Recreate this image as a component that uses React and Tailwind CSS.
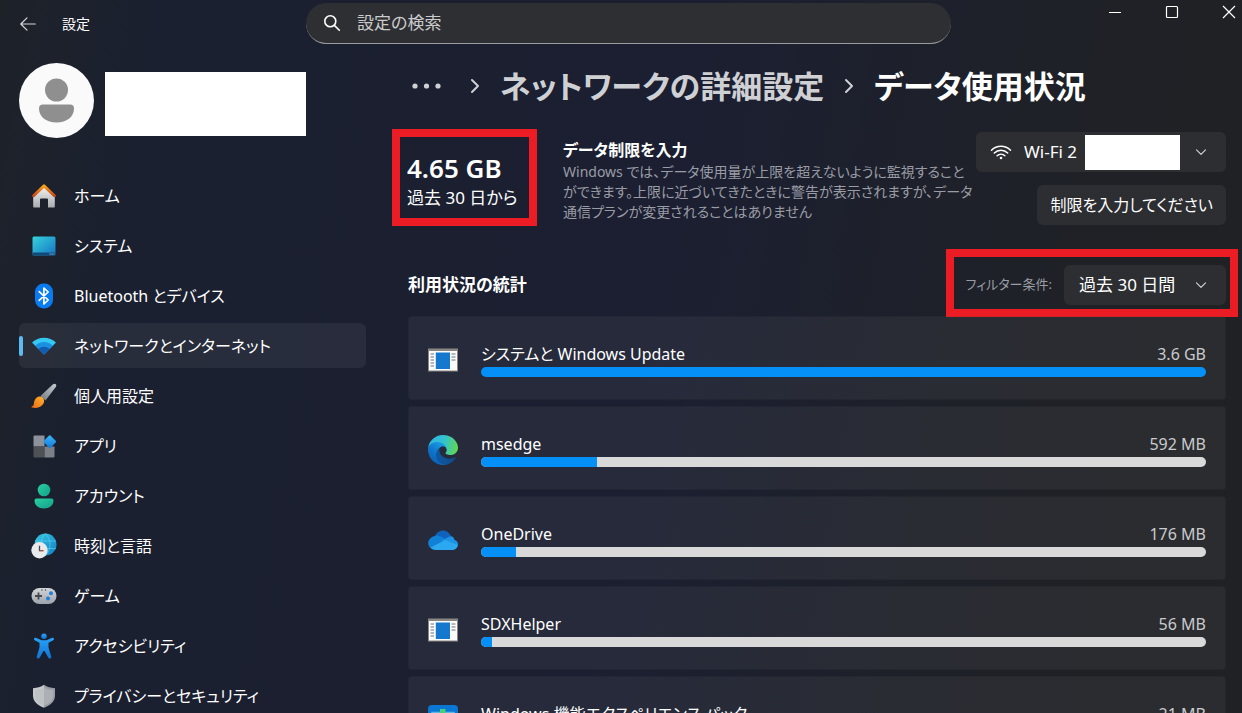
import React from 'react';

/* ---------- Navigation icons ---------- */

function HomeIcon() {
  return (
    <svg viewBox="0 0 24 24" className="w-6 h-6">
      <defs>
        <linearGradient id="homeWall" x1="0" y1="0" x2="0" y2="1">
          <stop offset="0" stopColor="#f3f3f3" />
          <stop offset="1" stopColor="#a9abae" />
        </linearGradient>
        <linearGradient id="homeRoof" x1="0" y1="0" x2="0" y2="1">
          <stop offset="0" stopColor="#f7a11b" />
          <stop offset="1" stopColor="#c9461a" />
        </linearGradient>
      </defs>
      <path d="M1.2 12 12 2.5 22.8 12v10.4a1.2 1.2 0 0 1-1.2 1.2H16V15.4a1 1 0 0 0-1-1H9a1 1 0 0 0-1 1v8.2H2.4a1.2 1.2 0 0 1-1.2-1.2z" fill="url(#homeWall)" />
      <path d="M1.6 11.8 12 1.9l10.4 9.9" fill="none" stroke="url(#homeRoof)" strokeWidth="2.9" strokeLinecap="round" strokeLinejoin="round" />
    </svg>
  );
}

function SystemIcon() {
  return (
    <svg viewBox="0 0 24 24" className="w-6 h-6">
      <defs>
        <linearGradient id="sysScreen" x1="0" y1="0" x2="1" y2="1">
          <stop offset="0" stopColor="#35d3dc" />
          <stop offset="1" stopColor="#1673c4" />
        </linearGradient>
      </defs>
      <rect x="0.5" y="2.5" width="23" height="19" rx="1.5" fill="url(#sysScreen)" />
      <path d="M.5 18.500h23V20a1.500 1.500 0 0 1-1.500 1.500H2A1.500 1.500 0 0 1 .5 20z" fill="#124a77" />
      <path d="M17.500 19.500h1.200v1h-1.200zM19.500 19.500h1.200v1h-1.200zM21.500 19.500h1v1h-1z" fill="#8fd0f0" />
    </svg>
  );
}

function BluetoothIcon() {
  return (
    <svg viewBox="0 0 24 26" className="w-6 h-[26px]">
      <rect x="3" y="0.500" width="18" height="25" rx="8.500" fill="#0a7cf2" />
      <path d="m7.200 8.700 9 8.300-4.300 4V5l4.300 4-9 8.300" fill="none" stroke="#fff" strokeWidth="1.700" strokeLinejoin="round" strokeLinecap="round" />
    </svg>
  );
}

function NetworkIcon() {
  return (
    <svg viewBox="0 0 24 24" className="w-6 h-6">
      <path d="M12 20.500 0 8.500C6.500 2 17.500 2 24 8.500z" fill="#35c8f3" />
      <path d="M12 20.500 3.200 11.700c4.900-4.800 12.700-4.800 17.600 0z" fill="#1b8fe0" />
      <path d="M12 20.500 6.400 14.900c3.100-3 8.100-3 11.200 0z" fill="#115bb0" />
    </svg>
  );
}

function BrushIcon() {
  return (
    <svg viewBox="0 0 26 26" className="w-[26px] h-[26px]">
      <defs>
        <linearGradient id="brushHandle" x1="1" y1="0" x2="0" y2="1">
          <stop offset="0" stopColor="#c6cad0" />
          <stop offset="1" stopColor="#767b83" />
        </linearGradient>
        <linearGradient id="brushTip" x1="1" y1="0" x2="0" y2="1">
          <stop offset="0" stopColor="#ffb52e" />
          <stop offset="1" stopColor="#ea6a12" />
        </linearGradient>
      </defs>
      <path d="M24.800 1.200c.9.900.5 2-.2 3L14.500 17.500l-5-4.600L21.700 1.500c1-.9 2.200-1.200 3.100-.3z" fill="url(#brushHandle)" />
      <path d="M8.200 13.600c2.400-.6 5.100 1.800 4.900 4.500-.2 4.600-5.600 8.200-12.100 6.400-.8-.3-.6-1 .1-1.200 2.200-.6 1.500-2.500 2.200-5 .7-2.500 2.600-4.300 4.900-4.700z" fill="url(#brushTip)" />
    </svg>
  );
}

function AppsIcon() {
  return (
    <svg viewBox="0 0 24 24" className="w-6 h-6">
      <defs>
        <linearGradient id="appDiamond" x1="0" y1="0" x2="1" y2="1">
          <stop offset="0" stopColor="#3bb8fa" />
          <stop offset="1" stopColor="#0f78d8" />
        </linearGradient>
      </defs>
      <path d="M2.500 1.500h10v11h-11v-10a1 1 0 0 1 1-1z" fill="#8d9199" />
      <path d="M1.500 12.500h11v11h-10a1 1 0 0 1-1-1z" fill="#4e5257" />
      <path d="M12.500 12.500h10v10a1 1 0 0 1-1 1h-9z" fill="#7b8087" />
      <rect x="13" y="2.800" width="9.600" height="9.600" rx="1" transform="rotate(45 17.800 7.600)" fill="url(#appDiamond)" />
    </svg>
  );
}

function AccountIcon() {
  return (
    <svg viewBox="0 0 24 26" className="w-6 h-[26px]">
      <defs>
        <linearGradient id="account" x1="0" y1="0" x2="1" y2="1">
          <stop offset="0" stopColor="#2ccf9f" />
          <stop offset="1" stopColor="#11a08c" />
        </linearGradient>
      </defs>
      <circle cx="12" cy="7" r="6.300" fill="url(#account)" />
      <path d="M4.500 15.500h15a2 2 0 0 1 2 2c0 4.800-4 8-9.500 8s-9.500-3.200-9.500-8a2 2 0 0 1 2-2z" fill="url(#account)" />
    </svg>
  );
}

function TimeIcon() {
  return (
    <svg viewBox="0 0 26 26" className="w-[26px] h-[26px]">
      <defs>
        <linearGradient id="globe" x1="0" y1="0" x2="1" y2="1">
          <stop offset="0" stopColor="#35c9e3" />
          <stop offset="1" stopColor="#137fc7" />
        </linearGradient>
      </defs>
      <circle cx="14.500" cy="11.500" r="11" fill="url(#globe)" />
      <path d="M4 8h21M4 15.500h21M14.500.5c-6 6-6 16 0 22M14.500.5c6 6 6 16 0 22" fill="none" stroke="#6fdcf0" strokeWidth="0.700" opacity="0.700" />
      <circle cx="8.500" cy="17.300" r="8.200" fill="#e9eaec" />
      <path d="M8.500 12.700v5h4" fill="none" stroke="#4a4a4e" strokeWidth="1.300" />
      <path d="M8.500 17.700h3.500" stroke="#c5524a" strokeWidth="0.900" />
    </svg>
  );
}

function GameIcon() {
  return (
    <svg viewBox="0 0 26 24" className="w-[26px] h-6">
      <defs>
        <linearGradient id="pad" x1="0" y1="0" x2="0" y2="1">
          <stop offset="0" stopColor="#d3d5d9" />
          <stop offset="1" stopColor="#9ea2aa" />
        </linearGradient>
      </defs>
      <rect x="0.500" y="4" width="25" height="16" rx="8" fill="url(#pad)" />
      <path d="M7.500 8.500v7M4 12h7" stroke="#45484d" strokeWidth="1.800" />
      <circle cx="20" cy="9.300" r="2" fill="#1f7fdb" />
      <circle cx="17" cy="14.500" r="2" fill="#1f7fdb" />
      <circle cx="11" cy="6" r="0.700" fill="#3d4045" />
      <circle cx="14.500" cy="6" r="0.700" fill="#3d4045" />
    </svg>
  );
}

function AccessibilityIcon() {
  return (
    <svg viewBox="0 0 24 26" className="w-6 h-[26px]">
      <defs>
        <linearGradient id="person" x1="0" y1="0" x2="0" y2="1">
          <stop offset="0" stopColor="#28a3f7" />
          <stop offset="1" stopColor="#0f74d6" />
        </linearGradient>
      </defs>
      <circle cx="12" cy="3.200" r="2.700" fill="url(#person)" />
      <path d="M3.800 4.800 9.500 7.300h5l5.700-2.500c1.600-.6 2.500 1.600 1.100 2.400l-4.800 2.500v4.800l2.700 8.900c.5 2-2.200 2.900-3 1.100L12.600 18h-1.200l-3.600 6.500c-.8 1.800-3.500.9-3-1.100l2.700-8.900V9.700L2.700 7.200C1.300 6.400 2.200 4.200 3.800 4.800z" fill="url(#person)" />
    </svg>
  );
}

function ShieldIcon() {
  return (
    <svg viewBox="0 0 24 24" className="w-6 h-6">
      <path d="M12 .8c3 2.300 6.800 3.200 11 3.400v7.300c0 5.800-4.200 9.800-11 12.200z" fill="#9a9ea4" />
      <path d="M12 .8C9 3.100 5.200 4 1 4.200v7.300c0 5.800 4.200 9.800 11 12.200z" fill="#c7cacd" />
      <path d="M12 3.300c2.600 1.800 5.600 2.600 9 2.800v5.600c0 4.500-3.500 7.900-9 9.900-5.500-2-9-5.400-9-9.900V6.100c3.400-.2 6.400-1 9-2.800z" fill="#b9bcc0" opacity="0.600" />
    </svg>
  );
}

/* ---------- App icons ---------- */

function WindowIcon() {
  return (
    <svg viewBox="0 0 30 30" className="w-[30px] h-[30px]">
      <rect x="0" y="3.500" width="30" height="23" fill="#8a8782" />
      <rect x="1" y="6" width="28" height="19.500" fill="#fbfbfb" />
      <rect x="7.800" y="7.500" width="14.200" height="16.500" fill="#1478cf" />
      <path d="M2.500 9h3.500M2.500 12h3.500M2.500 15h3.500M2.500 18h3.500M2.500 21h3.500M23.500 9h4M23.500 12h4M23.500 15h4" stroke="#6b7480" strokeWidth="1" />
    </svg>
  );
}

function EdgeIcon() {
  return (
    <svg viewBox="0 0 256 256" className="w-[30px] h-[30px]">
      <defs>
        <linearGradient id="edgeA" x1="63" y1="178" x2="241" y2="178" gradientUnits="userSpaceOnUse">
          <stop offset="0" stopColor="#0c59a4" />
          <stop offset="1" stopColor="#114a8b" />
        </linearGradient>
        <linearGradient id="edgeB" x1="157" y1="100" x2="46" y2="221" gradientUnits="userSpaceOnUse">
          <stop offset="0" stopColor="#1b9de2" />
          <stop offset="0.600" stopColor="#0f78cc" />
          <stop offset="1" stopColor="#0b63b8" />
        </linearGradient>
        <linearGradient id="edgeC" x1="10" y1="60" x2="256" y2="110" gradientUnits="userSpaceOnUse">
          <stop offset="0" stopColor="#2fb4e6" />
          <stop offset="0.500" stopColor="#33c3cf" />
          <stop offset="1" stopColor="#62d94b" />
        </linearGradient>
      </defs>
      <path d="M231 190.500c-3.400 1.800-6.900 3.400-10.500 4.700a101 101 0 0 1-35.900 6.500c-47.300 0-88.500-32.500-88.500-74.300a31.500 31.500 0 0 1 16.400-27.300c-42.800 1.800-53.800 46.400-53.800 72.500 0 74 68.100 81.400 82.800 81.400 7.900 0 19.800-2.300 27-4.600l1.300-.4a128.300 128.300 0 0 0 66.600-52.800 4 4 0 0 0-5.400-5.700z" fill="url(#edgeA)" />
      <path d="M105.700 241.400A79.200 79.200 0 0 1 83 220.100a80.700 80.700 0 0 1 29.500-120c3.200-1.500 8.500-4.200 15.600-4.100a32.400 32.400 0 0 1 25.700 13 31.900 31.900 0 0 1 6.300 18.700c0-.2 24.500-79.600-80-79.600-43.900 0-80 41.700-80 78.200a130.200 130.200 0 0 0 12.100 56 128 128 0 0 0 156.400 67.100 75.500 75.500 0 0 1-62.900-8z" fill="url(#edgeB)" />
      <path d="M152.300 148.900c-.9 1-3.400 2.500-3.400 5.600 0 2.600 1.700 5.200 4.800 7.300 14.300 10 41.400 8.600 41.500 8.600a59.600 59.600 0 0 0 30.300-8.300 61.400 61.400 0 0 0 30.400-52.900c.3-22.400-8-37.300-11.300-43.900C223.500 23.900 177.700 0 128 0A128 128 0 0 0 0 126.200c.5-36.500 36.800-66 80-66 3.500 0 23.500.3 42 10a72.600 72.600 0 0 1 30.900 29.300c6.100 10.600 7.200 24.100 7.200 29.500s-2.700 13.300-7.800 19.900z" fill="url(#edgeC)" />
    </svg>
  );
}

function OneDriveIcon() {
  return (
    <svg viewBox="0 0 30 30" className="w-[30px] h-[30px]">
      <path d="M7 11.200C9.500 4.700 18.500 2.700 23 10.800l-4 6z" fill="#0f63bd" />
      <path d="M6.600 10.900c3.700-1 6 .4 8.400 1.900l6 3.700L6 24.500c-7.300-.8-8.300-11.400.6-13.600z" fill="#1180d5" />
      <path d="M20.500 12c3-2 5.800.2 5.800 2.800 5.400 1.700 4.700 8.200-.3 9.500L14 15.500z" fill="#1c93e6" />
      <path d="m2.500 22.500 14.800-7.500L29.500 20c-.3 3-2.600 5-5.300 5H7.500c-2 0-3.800-.9-5-2.500z" fill="#2ba8f0" />
    </svg>
  );
}

function FeaturePackIcon() {
  return (
    <svg viewBox="0 0 30 30" className="w-[30px] h-[30px]">
      <rect width="30" height="30" rx="4" fill="#0b77d4" />
      <rect x="4" y="7.500" width="22" height="17" fill="none" stroke="#58b6e8" strokeWidth="1.500" />
      <path d="M12 4h5.500v5H23v5.500h-5.500V20H12v-5.500H7V9h5z" fill="#45d07c" />
    </svg>
  );
}

/* ---------- Small glyphs ---------- */

function Chevron({ className }) {
  return (
    <svg viewBox="0 0 12 12" className={className} fill="none" stroke="currentColor" strokeLinecap="round" strokeLinejoin="round">
      <path d="m1.500 3.800 4.500 4.500 4.500-4.500" strokeWidth="1.200" />
    </svg>
  );
}

function CrumbChevron() {
  return (
    <svg viewBox="0 0 12 16" className="w-3 h-4 shrink-0 text-[#cfd0d4]" fill="none" stroke="currentColor" strokeWidth="2" strokeLinecap="round" strokeLinejoin="round">
      <path d="m3 2 6 6-6 6" />
    </svg>
  );
}

function WifiGlyph() {
  return (
    <svg viewBox="0 0 22 16" className="w-[22px] h-4" fill="none" stroke="#fff" strokeWidth="1.500" strokeLinecap="round">
      <path d="M1.500 6.200c5.300-5.300 13.700-5.300 19 0M4.300 9c3.700-3.700 9.700-3.700 13.400 0M7.100 11.700c2.200-2.100 5.600-2.100 7.800 0" />
      <circle cx="11" cy="14" r="1.300" fill="#fff" stroke="none" />
    </svg>
  );
}

const navItems = [
  { label: 'ホーム', Icon: HomeIcon },
  { label: 'システム', Icon: SystemIcon },
  { label: 'Bluetooth とデバイス', Icon: BluetoothIcon },
  { label: 'ネットワークとインターネット', Icon: NetworkIcon, active: true },
  { label: '個人用設定', Icon: BrushIcon },
  { label: 'アプリ', Icon: AppsIcon },
  { label: 'アカウント', Icon: AccountIcon },
  { label: '時刻と言語', Icon: TimeIcon },
  { label: 'ゲーム', Icon: GameIcon },
  { label: 'アクセシビリティ', Icon: AccessibilityIcon },
  { label: 'プライバシーとセキュリティ', Icon: ShieldIcon },
];

const usage = [
  { name: 'システムと Windows Update', amount: '3.6 GB', percent: 100, Icon: WindowIcon },
  { name: 'msedge', amount: '592 MB', percent: 16, Icon: EdgeIcon },
  { name: 'OneDrive', amount: '176 MB', percent: 4.8, Icon: OneDriveIcon },
  { name: 'SDXHelper', amount: '56 MB', percent: 1.5, Icon: WindowIcon },
  { name: 'Windows 機能エクスペリエンス パック', amount: '21 MB', percent: 0.6, Icon: FeaturePackIcon },
];

function TitleBar() {
  return (
    <header className="flex h-[47px] shrink-0 items-center">
      <div className="flex w-[306px] shrink-0 items-center gap-[26px] pl-5">
        <button type="button" aria-label="戻る" className="text-[#d6d7da]">
          <svg viewBox="0 0 16 16" className="w-4 h-4" fill="none" stroke="currentColor" strokeWidth="1.200" strokeLinecap="round" strokeLinejoin="round">
            <path d="M15.300 8H1M7 1.800.8 8 7 14.200" />
          </svg>
        </button>
        <span className="text-sm">設定</span>
      </div>
      <label className="flex h-[41px] max-w-[645px] flex-1 items-center gap-4 rounded-full border-b border-[#9a9b9e] bg-[#2e2f32] pl-[17px] pr-5">
        <svg viewBox="0 0 18 18" className="w-[18px] h-[18px] shrink-0" fill="none" stroke="#fff" strokeWidth="1.600" strokeLinecap="round">
          <circle cx="7.300" cy="7.300" r="5.500" />
          <path d="m11.400 11.400 4.900 4.900" />
        </svg>
        <input type="text" aria-label="設定の検索" placeholder="設定の検索" className="min-w-0 flex-1 bg-transparent text-[17px] text-white outline-none placeholder:text-[#cacbcd]" />
      </label>
      <div className="ml-auto flex gap-[31px] self-start text-white">
        <button type="button" aria-label="最小化" className="flex h-6 w-[26px] items-center justify-center">
          <svg viewBox="0 0 14 14" className="w-3.5 h-3.5" stroke="currentColor"><path d="M1 7.500h12" /></svg>
        </button>
        <button type="button" aria-label="最大化" className="flex h-6 w-[26px] items-center justify-center">
          <svg viewBox="0 0 14 14" className="w-3.5 h-3.5" fill="none" stroke="currentColor" strokeWidth="1.200"><rect x="1.500" y="1.500" width="11" height="11" rx="1" /></svg>
        </button>
        <button type="button" aria-label="閉じる" className="flex h-6 w-[26px] items-center justify-center">
          <svg viewBox="0 0 14 14" className="w-3.5 h-3.5" stroke="currentColor" strokeWidth="1.200"><path d="m1 1 12 12M13 1 1 13" /></svg>
        </button>
      </div>
    </header>
  );
}

function Sidebar() {
  return (
    <aside className="w-[366px] shrink-0 pl-[19px] pt-4">
      {/* Profile */}
      <div className="flex items-center gap-[11px]">
        <svg viewBox="0 0 75 75" className="w-[75px] h-[75px]">
          <circle cx="37.500" cy="37.500" r="37.500" fill="#fafafa" />
          <circle cx="37.500" cy="27" r="11.500" fill="#8f8f8f" />
          <path d="M24 41.500h27a4 4 0 0 1 4 4c0 8.500-7.500 14-17.500 14S20 54 20 45.500a4 4 0 0 1 4-4z" fill="#8f8f8f" />
        </svg>
        <div className="mt-1.5 h-16 w-[201px] bg-white" />
      </div>

      {/* Sections */}
      <nav className="mt-[35px] flex flex-col gap-[5px]">
        {navItems.map(({ label, Icon, active }) => (
          <a
            key={label}
            href="#"
            aria-current={active ? 'page' : undefined}
            className={`relative flex h-[45px] items-center gap-[17px] rounded-md pl-3 ${active ? 'bg-white/6' : ''}`}
          >
            {active && <span className="absolute left-0 h-5 w-1 rounded-full bg-[#5cbcf2]" />}
            <span className="flex w-[26px] justify-center"><Icon /></span>
            <span className="text-base whitespace-nowrap">{label}</span>
          </a>
        ))}
      </nav>
    </aside>
  );
}

function UsageCard({ name, amount, percent, Icon }) {
  return (
    <li className="flex shrink-0 items-center gap-[23px] rounded-sm border border-black/10 bg-white/5 px-[19px] pt-[25px] pb-[22px]">
      <Icon />
      <div className="min-w-0 flex-1">
        <div className="flex justify-between text-base leading-6">
          <span>{name}</span>
          <span className="text-[#c9cacd]">{amount}</span>
        </div>
        <div className="mt-px h-2.5 overflow-hidden rounded-full bg-[#d9d9d9]">
          <div className="h-full bg-[#0590f8]" style={{ width: `${percent}%` }} />
        </div>
      </div>
    </li>
  );
}

export default function App() {
  return (
    <div className="flex h-screen flex-col overflow-hidden bg-[linear-gradient(100deg,#1d2229_0%,#1b2030_12%,#1b1f31_52%,#1e2129_74%,#202124_92%)] font-['Noto_Sans','Noto_Sans_CJK_JP',sans-serif] text-white [font-feature-settings:'palt']">
      <TitleBar />
      <div className="flex min-h-0 flex-1">
        <Sidebar />
        <main className="min-w-0 flex-1 pl-[42px] pr-4">
          {/* Breadcrumb */}
          <div className="flex h-[82px] items-center gap-[19px] pl-1 pb-1 text-[31px] font-semibold whitespace-nowrap">
            <button type="button" aria-label="その他" className="mr-2 text-[#cfd0d4]">
              <svg viewBox="0 0 30 6" className="w-[30px] h-1.5" fill="currentColor">
                <circle cx="3" cy="3" r="2.600" />
                <circle cx="14.500" cy="3" r="2.600" />
                <circle cx="26" cy="3" r="2.600" />
              </svg>
            </button>
            <CrumbChevron />
            <a href="#" className="text-[#cfd0d4]">ネットワークの詳細設定</a>
            <CrumbChevron />
            <h1>データ使用状況</h1>
          </div>

          {/* Total and data limit */}
          <section className="flex items-start">
            <div className="-ml-4 w-[145px] shrink-0 border-8 border-[#ec1c24] px-[7px] pt-3.5 pb-2 whitespace-nowrap">
              <p className="text-[26px] leading-[34px] font-semibold">4.65 GB</p>
              <p className="text-[17px] leading-[25px]">過去 30 日から</p>
            </div>
            <div className="ml-[26px] flex-1 pt-[9px]">
              <h2 className="text-base leading-6 font-semibold">データ制限を入力</h2>
              <p className="text-sm leading-5 whitespace-nowrap text-[#9a9ca5]">
                Windows では、データ使用量が上限を超えないように監視すること
                <br />
                ができます。上限に近づいてきたときに警告が表示されますが、データ
                <br />
                通信プランが変更されることはありません
              </p>
            </div>
            <div className="flex flex-col items-end gap-[13px] pt-[3px]">
              <div className="relative flex items-center">
                <span className="pointer-events-none absolute left-3.5"><WifiGlyph /></span>
                <select aria-label="ネットワーク" className="h-10 w-[250px] appearance-none rounded-md bg-[#2d2e32] pl-12 text-[17px]">
                  <option>Wi-Fi 2</option>
                </select>
                <span className="pointer-events-none absolute right-[46px] h-[35px] w-[95px] bg-white" />
                <Chevron className="pointer-events-none absolute right-[19px] w-3 h-3 text-[#cfd0d4]" />
              </div>
              <button type="button" className="h-10 rounded-md bg-[#2d2e32] px-[13px] text-base">
                制限を入力してください
              </button>
            </div>
          </section>

          {/* Statistics */}
          <section className="mt-[23px]">
            <div className="flex items-center justify-between">
              <h2 className="pt-1 text-[17px] font-semibold">利用状況の統計</h2>
              <div className="-mr-3 -mb-px flex items-center gap-3 border-8 border-[#ec1c24] pt-2 pr-1 pb-1 pl-3">
                <label htmlFor="range" className="text-[13px] text-[#9a9ca5]">フィルター条件:</label>
                <div className="relative flex items-center">
                  <select id="range" className="h-10 w-[162px] appearance-none rounded-md bg-[#2d2e32] pl-[15px] text-[17px]">
                    <option>過去 30 日間</option>
                  </select>
                  <Chevron className="pointer-events-none absolute right-[19px] w-3 h-3 text-[#cfd0d4]" />
                </div>
              </div>
            </div>
            <ul className="flex flex-col gap-1.5">
              {usage.map((item) => (
                <UsageCard key={item.name} {...item} />
              ))}
            </ul>
          </section>
        </main>
      </div>
    </div>
  );
}
